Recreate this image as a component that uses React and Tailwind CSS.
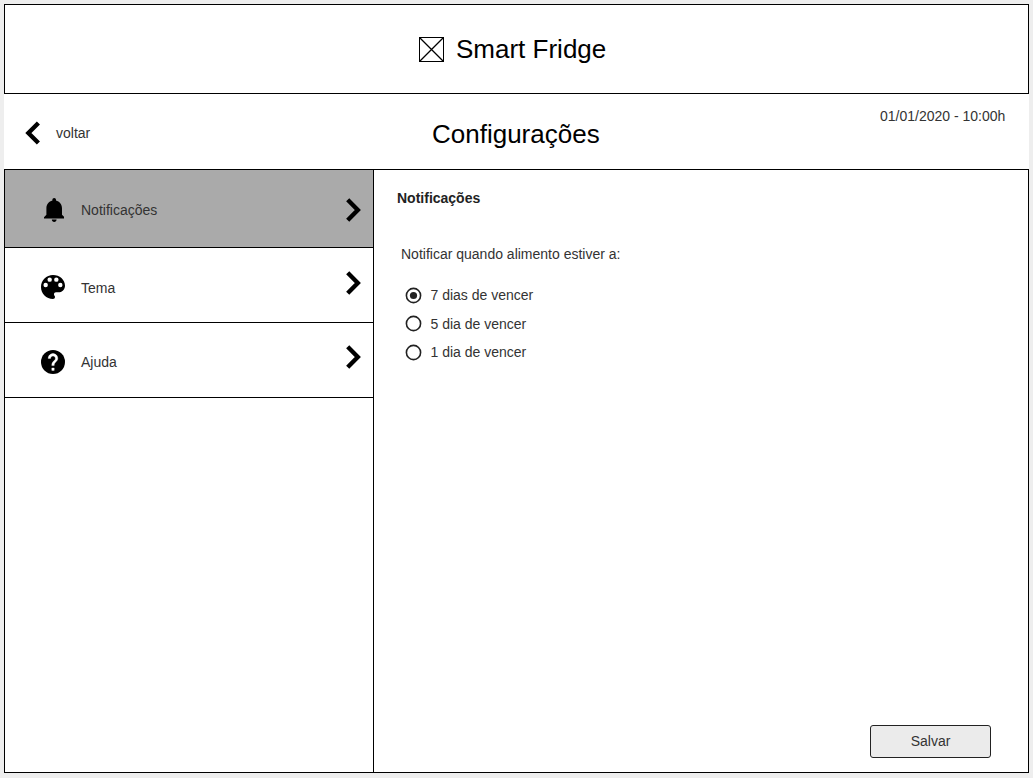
import React from "react";

function Chevron({ left = false, className = "" }) {
  return (
    <svg viewBox="0 0 16 24" className={"h-6 w-4 shrink-0 " + className} fill="none" stroke="#000" strokeWidth="4.4">
      <path d={left ? "M13.4 2 3.4 12l10 10" : "M1.7 1.8 11.8 12 1.7 22.2"} />
    </svg>
  );
}

function BellIcon() {
  return (
    <svg viewBox="3 2 17 20" className="mt-[28px] ml-[2px] h-[24px] w-[20.4px]" fill="#000">
      <path d="M11.5 22c1.1 0 2-.9 2-2h-4c0 1.1.9 2 2 2zm6.5-6v-5.5c0-3.07-2.13-5.64-5-6.32V3.5c0-.83-.67-1.5-1.5-1.5S10 2.67 10 3.5v.68c-2.87.68-5 3.25-5 6.32V16l-2 2v1h17v-1l-2-2z" />
    </svg>
  );
}

function PaletteIcon() {
  return (
    <svg viewBox="3 3 18 18" className="mt-[27px] size-[24px]" fill="#000">
      <path d="M12 3c-4.97 0-9 4.03-9 9s4.03 9 9 9c.83 0 1.5-.67 1.5-1.5 0-.39-.15-.74-.39-1.01-.23-.26-.38-.61-.38-.99 0-.83.67-1.5 1.5-1.5H16c2.76 0 5-2.24 5-5 0-4.42-4.03-8-9-8z" />
      <g fill="#fff">
        <circle cx="6.5" cy="10.5" r="1.65" />
        <circle cx="9.5" cy="6.5" r="1.65" />
        <circle cx="14.5" cy="6.5" r="1.65" />
        <circle cx="17.5" cy="10.5" r="1.65" />
      </g>
    </svg>
  );
}

function HelpIcon() {
  return (
    <svg viewBox="2 2 20 20" className="mt-[27px] size-[24px]">
      <circle cx="12" cy="12" r="10" fill="#000" />
      <path
        fill="#fff"
        stroke="#fff"
        strokeWidth="0.3"
        d="M13 19h-2v-2h2v2zm2.07-7.75l-.9.92C13.45 12.9 13 13.5 13 15h-2v-.5c0-1.100.45-2.100 1.170-2.830l1.240-1.260c.37-.36.59-.86.59-1.410 0-1.100-.9-2-2-2s-2 .9-2 2H8c0-2.210 1.790-4 4-4s4 1.790 4 4c0 .88-.36 1.680-.93 2.250z"
      />
    </svg>
  );
}

function MenuRow({ icon, label, rowClass, labelClass, chevronClass }) {
  return (
    <li className={"flex items-start border-b border-black " + rowClass}>
      <span className="flex w-[76px] shrink-0 justify-center pl-[20px]">{icon}</span>
      <span className={"grow leading-4 " + labelClass}>{label}</span>
      <Chevron className={"mr-[11px] " + chevronClass} />
    </li>
  );
}

function Radio({ label, checked = false }) {
  return (
    <label className="flex h-[28.5px] items-center">
      <svg viewBox="0 0 17 17" className="mr-[8.5px] size-[17px] shrink-0">
        <circle cx="8.5" cy="8.5" r="7.1" fill="none" stroke="#222" strokeWidth="1.6" />
        {checked && <circle cx="8.5" cy="8.5" r="3.6" fill="#222" />}
      </svg>
      <span className="leading-4">{label}</span>
    </label>
  );
}

export default function App() {
  return (
    <div className="h-[778px] w-[1033px] bg-[#eeeeee] pl-1 pt-1 font-['Liberation_Sans',Arial,sans-serif] text-[14px] text-[#333333]">
      <div className="flex h-[769px] w-[1025px] flex-col bg-white">
        <header className="flex h-[90px] shrink-0 items-center border border-black pl-[414px]">
          <svg viewBox="0 0 25 25" className="mr-[12px] mt-[1px] size-[25px]" fill="none" stroke="#000">
            <rect x="0.5" y="0.5" width="24" height="24" />
            <path d="M.5.5l24 24M24.5.5l-24 24" strokeWidth="1.3" />
          </svg>
          <h1 className="text-[26px] leading-8 text-black">Smart Fridge</h1>
        </header>

        <div className="flex h-[75px] shrink-0 items-start bg-white">
          <button className="flex w-[428px] items-center pl-[21px] pt-[27px] text-left">
            <Chevron left />
            <span className="pl-[15px] leading-4">voltar</span>
          </button>
          <h2 className="w-[448px] pt-[24px] text-[26px] leading-8 text-black">Configurações</h2>
          <time className="whitespace-nowrap pt-[14px] leading-4">01/01/2020 - 10:00h</time>
        </div>

        <main className="flex min-h-0 grow border border-black">
          <nav className="w-[369px] shrink-0 border-r border-black">
            <ul>
              <MenuRow
                icon={<BellIcon />}
                label="Notificações"
                rowClass="h-[78px] bg-[#aaaaaa]"
                labelClass="pt-[32px]"
                chevronClass="mt-[28px]"
              />
              <MenuRow
                icon={<PaletteIcon />}
                label="Tema"
                rowClass="h-[75px]"
                labelClass="pt-[32px]"
                chevronClass="mt-[23px]"
              />
              <MenuRow
                icon={<HelpIcon />}
                label="Ajuda"
                rowClass="h-[75px]"
                labelClass="pt-[31px]"
                chevronClass="mt-[22px]"
              />
            </ul>
          </nav>

          <section className="flex grow flex-col pl-[23px]">
            <h3 className="pt-[20px] font-bold leading-4 text-[#222222]">Notificações</h3>
            <p className="pl-1 pt-[40px] leading-4">Notificar quando alimento estiver a:</p>
            <div className="pl-[8px] pt-[19px]">
              <Radio label="7 dias de vencer" checked />
              <Radio label="5 dia de vencer" />
              <Radio label="1 dia de vencer" />
            </div>
            <button className="mr-[37px] mb-[14px] mt-auto h-[33px] w-[121px] self-end rounded-[3px] border border-[#222222] bg-[#ebebeb]">
              Salvar
            </button>
          </section>
        </main>
      </div>
    </div>
  );
}
